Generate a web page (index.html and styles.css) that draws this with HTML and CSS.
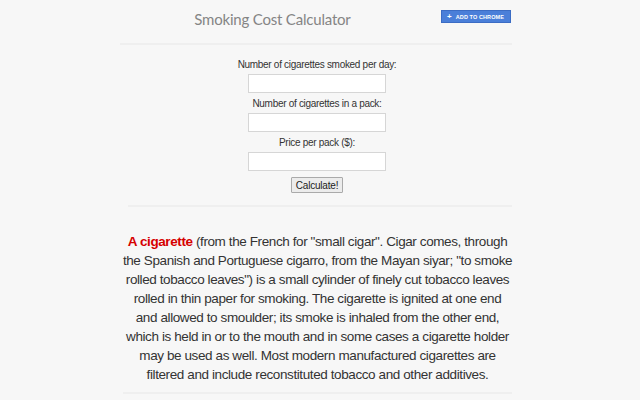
FILE: index.html
```html
<!DOCTYPE html>
<html>
<head>
<meta charset="utf-8">
<link rel="stylesheet" href="styles.css">
</head>
<body>
<div class="page">
  <header class="header">
    <h1 class="title">Smoking Cost Calculator</h1>
    <a class="chrome-btn" href="#"><span class="plus">+</span>ADD TO CHROME</a>
  </header>
  <section class="form">
    <label class="label">Number of cigarettes smoked per day:</label>
    <input class="field" type="text">
    <label class="label">Number of cigarettes in a pack:</label>
    <input class="field" type="text">
    <label class="label">Price per pack ($):</label>
    <input class="field" type="text">
    <button class="calc">Calculate!</button>
  </section>
  <section class="info">
    <p class="text"><strong class="hl">A cigarette</strong> (from the French for "small cigar". Cigar comes, through<br>the Spanish and Portuguese cigarro, from the Mayan siyar; "to smoke<br>rolled tobacco leaves") is a small cylinder of finely cut tobacco leaves<br>rolled in thin paper for smoking. The cigarette is ignited at one end<br>and allowed to smoulder; its smoke is inhaled from the other end,<br>which is held in or to the mouth and in some cases a cigarette holder<br>may be used as well. Most modern manufactured cigarettes are<br>filtered and include reconstituted tobacco and other additives.</p>
  </section>
</div>
</body>
</html>
```

FILE: styles.css
```css
html, body {
  margin: 0;
  padding: 0;
  background: #f7f7f7;
}
body {
  font-family: "Liberation Sans", Arial, sans-serif;
  color: #333;
}
.page {
  width: 392px;
  margin: 0 0 0 120px;
}
.header {
  display: grid;
  grid-template-columns: 1fr auto;
  align-items: start;
  height: 43px;
  border-bottom: 2px solid #efefef;
}
.title {
  margin: 0;
  padding: 9px 16px 0 0;
  text-align: center;
  font-family: "Lato", sans-serif;
  font-weight: 400;
  font-size: 15px;
  line-height: 20px;
  letter-spacing: -0.2px;
  color: #858585;
}
.chrome-btn {
  display: flex;
  align-items: center;
  gap: 4px;
  margin-top: 10px;
  margin-right: 1px;
  height: 11px;
  padding: 0 6px 0 5px;
  background: #4a7fd9;
  border: 1px solid #3b6cc4;
  color: #fff;
  font-size: 5.5px;
  font-weight: 700;
  text-decoration: none;
  letter-spacing: 0.1px;
}
.plus {
  font-size: 8px;
  line-height: 8px;
}
.form {
  display: flex;
  flex-direction: column;
  align-items: center;
  padding: 14px 6px 12px 0;
  border-bottom: 2px solid #efefef;
  margin-left: 8px;
}
.label {
  font-size: 10px;
  line-height: 12px;
  letter-spacing: -0.3px;
  color: #333;
  margin-bottom: 3px;
}
.field {
  box-sizing: border-box;
  width: 138px;
  height: 19px;
  margin: 0 0 5px;
  border: 1px solid #d6d6d6;
  background: #fff;
  padding: 0;
}
.calc {
  margin-top: 1px;
  font-family: "Liberation Sans", Arial, sans-serif;
  font-size: 10px;
  letter-spacing: -0.2px;
  height: 16px;
  padding: 0 4px;
  color: #222;
  background: #ececec;
  border: 1px solid #aaa;
  border-radius: 1px;
}
.info {
  display: flex;
  justify-content: center;
  box-sizing: border-box;
  padding: 25px 0 0;
  border-bottom: 2px solid #efefef;
  margin-left: 3px;
  height: 187px;
}
.text {
  margin: 0;
  text-align: center;
  white-space: nowrap;
  font-family: "Liberation Sans", Arial, sans-serif;
  font-size: 13.5px;
  line-height: 19px;
  letter-spacing: -0.4px;
  color: #333;
}
.hl {
  color: #d60000;
  font-weight: 700;
}
```
